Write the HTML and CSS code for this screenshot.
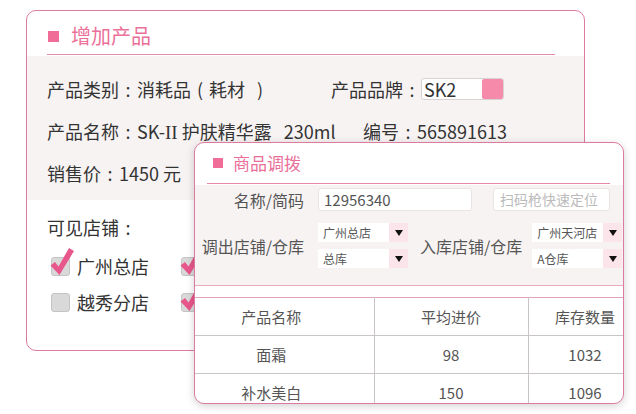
FILE: index.html
```html
<!DOCTYPE html>
<html lang="zh-CN">
<head>
<meta charset="utf-8">
<title>增加产品</title>
<link rel="stylesheet" href="styles.css">
</head>
<body>
<div class="card back">
  <div class="head"><span class="sq"></span><span class="ttl">增加产品</span></div>
  <div class="band">
    <div class="row"><span class="c1">产品类别<span class="col">:</span>消耗品<span class="par">(</span>耗材<span class="par par-r">)</span></span><span>产品品牌<span class="col">:</span></span><span class="brand"><span class="bt">SK2</span><span class="bp"></span></span></div>
    <div class="row"><span class="c2">产品名称<span class="col">:</span>SK-<span class="serif">II</span> 护肤精华露&nbsp;&nbsp;&nbsp;230ml</span><span>编号<span class="col">:</span>565891613</span></div>
    <div class="row">销售价<span class="col">:</span>1450 元</div>
  </div>
  <div class="stores">
    <div class="lbl">可见店铺<span class="col">:</span></div>
    <div class="chk-row">
      <div class="chk"><span class="box"><svg width="24" height="28" viewBox="0 0 24 28"><path d="M0.5 17.5 L5 14 L8.5 18.5 L19 0 L24 3 L9.5 27 Z" fill="#e8578b"/></svg></span>广州总店</div>
      <div class="chk"><span class="box"><svg width="24" height="28" viewBox="0 0 24 28"><path d="M0.5 17.5 L5 14 L8.5 18.5 L19 0 L24 3 L9.5 27 Z" fill="#e8578b"/></svg></span></div>
    </div>
    <div class="chk-row">
      <div class="chk"><span class="box"></span>越秀分店</div>
      <div class="chk"><span class="box"><svg width="24" height="28" viewBox="0 0 24 28"><path d="M0.5 17.5 L5 14 L8.5 18.5 L19 0 L24 3 L9.5 27 Z" fill="#e8578b"/></svg></span></div>
    </div>
  </div>
</div>

<div class="card front">
  <div class="fhead"><span class="fsq"></span><span class="fttl">商品调拨</span></div>
  <div class="fband">
    <div class="frow1">
      <span class="flabel">名称/简码</span>
      <span class="inp">12956340</span>
      <span class="inp ph">扫码枪快速定位</span>
    </div>
    <div class="frow2">
      <span class="flabel">调出店铺/仓库</span>
      <div class="sels">
        <div class="sel"><span class="st">广州总店</span><span class="arr"><i></i></span></div>
        <div class="sel"><span class="st">总库</span><span class="arr"><i></i></span></div>
      </div>
      <span class="flabel2">入库店铺/仓库</span>
      <div class="sels">
        <div class="sel"><span class="st">广州天河店</span><span class="arr"><i></i></span></div>
        <div class="sel"><span class="st">A仓库</span><span class="arr"><i></i></span></div>
      </div>
    </div>
  </div>
  <table class="tbl">
    <colgroup><col class="w1"><col class="w2"><col class="w3"></colgroup>
    <tr><td class="t1">产品名称</td><td>平均进价</td><td>库存数量</td></tr>
    <tr><td class="t1">面霜</td><td>98</td><td>1032</td></tr>
    <tr><td class="t1">补水美白</td><td>150</td><td>1096</td></tr>
  </table>
</div>
</body>
</html>
```
FILE: styles.css
```css
html, body {
  margin: 0;
  padding: 0;
}
body {
  position: relative;
  width: 636px;
  height: 414px;
  overflow: hidden;
  background: #fff;
  font-family: "Noto Sans CJK SC", "Open Sans", sans-serif;
  padding: 10px 0 0 26px;
  box-sizing: border-box;
}
.card {
  box-sizing: border-box;
  border: 1px solid #dc7aa2;
  border-radius: 10px;
  background: #fff;
  overflow: hidden;
}
.back {
  width: 559px;
  height: 341px;
}
.head {
  display: flex;
  align-items: center;
  height: 22px;
  margin: 0 29px 1px 20px;
  padding: 14px 0 7px;
  border-bottom: 1px solid #e58aab;
}
.sq {
  width: 11px;
  height: 11px;
  background: #ef6d97;
  margin-left: 1px;
  margin-right: 12px;
}
.ttl {
  font-size: 20px;
  line-height: 22px;
  color: #ea7099;
}
.band {
  background: #f8f3f3;
  padding: 12px 20px 6px;
}
.row {
  display: flex;
  align-items: center;
  height: 42px;
  font-size: 18px;
  color: #333;
  white-space: nowrap;
}
.col {
  display: inline-block;
  width: 18px;
  text-align: center;
}
.par {
  display: inline-block;
  width: 18px;
  text-align: center;
}
.par-r {
  margin-left: 6px;
}
.serif {
  font-family: "Liberation Serif", serif;
  font-size: 19px;
}
.c1 { width: 284px; }
.c2 { width: 316px; }
.brand {
  display: flex;
  align-items: center;
  box-sizing: border-box;
  width: 83px;
  height: 22px;
  border: 1px solid #d9d2d2;
  border-radius: 3px;
  background: #fff;
}
.bt {
  flex: 1;
  padding-left: 2px;
  font-size: 18px;
  line-height: 20px;
  color: #333;
}
.bp {
  width: 21px;
  height: 20px;
  background: #f58aab;
  border-radius: 2px;
}
.stores {
  padding: 12px 0 0 20px;
  font-size: 18px;
  color: #333;
}
.lbl {
  line-height: 30px;
  margin-bottom: 6px;
}
.chk-row {
  display: flex;
  align-items: center;
  height: 36px;
  padding-left: 4px;
}
.chk {
  display: flex;
  align-items: center;
  width: 130px;
  white-space: nowrap;
}
.box {
  position: relative;
  box-sizing: border-box;
  width: 19px;
  height: 19px;
  background: #d9d9d9;
  border: 1px solid #c4c4c4;
  border-radius: 3px;
  margin-right: 7px;
}
.box svg {
  position: absolute;
  left: -2px;
  top: -10px;
}

.front {
  position: absolute;
  left: 194px;
  top: 142px;
  width: 430px;
  height: 262px;
  box-shadow: 0 2px 8px rgba(0, 0, 0, 0.18);
}
.fhead {
  display: flex;
  align-items: center;
  height: 22px;
  margin: 0 13px 1px 12px;
  padding: 9px 0;
  border-bottom: 1px solid #e58aab;
}
.fsq {
  width: 10px;
  height: 10px;
  background: #ef6d97;
  margin-left: 6px;
  margin-right: 10px;
}
.fttl {
  font-size: 17px;
  line-height: 22px;
  color: #ea7099;
}
.fband {
  background: #f8f3f3;
  padding: 3px 0 17px;
  border-bottom: 1px solid #e9a9bf;
}
.frow1 {
  display: flex;
  align-items: center;
  height: 23px;
}
.flabel {
  width: 109px;
  margin-right: 14px;
  text-align: right;
  font-size: 16px;
  color: #555;
  white-space: nowrap;
}
.inp {
  box-sizing: border-box;
  width: 154px;
  height: 23px;
  border: 1px solid #ebe4e4;
  border-radius: 3px;
  background: #fff;
  padding-left: 5px;
  font-size: 15px;
  line-height: 21px;
  color: #555;
}
.inp.ph {
  width: 117px;
  margin-left: 21px;
  padding-left: 6px;
  font-size: 14px;
  color: #bbb;
}
.frow2 {
  display: flex;
  align-items: center;
  margin-top: 12px;
}
.sels {
  display: flex;
  flex-direction: column;
  gap: 7px;
}
.sel {
  display: flex;
  box-sizing: border-box;
  width: 90px;
  height: 19px;
  background: #fff;
}
.st {
  flex: 1;
  padding-left: 5px;
  font-size: 12px;
  line-height: 19px;
  color: #555;
  white-space: nowrap;
  overflow: hidden;
}
.arr {
  display: flex;
  align-items: center;
  justify-content: center;
  width: 19px;
  background: #fbe4ea;
}
.arr i {
  width: 0;
  height: 0;
  border-left: 4px solid transparent;
  border-right: 4px solid transparent;
  border-top: 6px solid #111;
}
.flabel2 {
  margin: 0 10px 0 12px;
  font-size: 16px;
  color: #555;
  white-space: nowrap;
}
.tbl {
  margin-top: 11px;
  border-collapse: collapse;
  table-layout: fixed;
  width: 447px;
  border-top: 1px solid #e0a3b9;
}
.w1 { width: 179px; }
.w2 { width: 154px; }
.w3 { width: 114px; }
.tbl td {
  height: 37px;
  padding: 0;
  text-align: center;
  font-size: 15px;
  color: #555;
  border-right: 1px solid #c9c4c6;
  border-bottom: 1px solid #c9c4c6;
  white-space: nowrap;
}
.tbl td.t1 {
  padding-right: 26px;
}
```
